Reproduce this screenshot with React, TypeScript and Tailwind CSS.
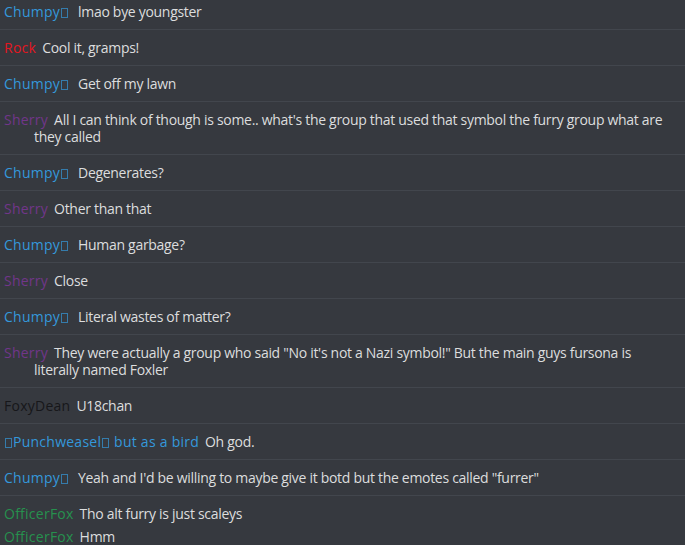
import React from 'react';

type Line = { name: string; color: string; text: string; tofu?: 'end' | 'both'; suffix?: string };

const Tofu: React.FC = () => (
  <span className="inline-block w-[7px] h-[10px] border border-current opacity-70 align-[-1px] mx-[1px]" />
);

const groups: Line[][] = [
  [{ name: 'Chumpy', color: 'text-[#3498db]', tofu: 'end', text: 'lmao bye youngster' }],
  [{ name: 'Rock', color: 'text-[#e3171f]', text: 'Cool it, gramps!' }],
  [{ name: 'Chumpy', color: 'text-[#3498db]', tofu: 'end', text: 'Get off my lawn' }],
  [
    {
      name: 'Sherry',
      color: 'text-[#71368a]',
      text: "All I can think of though is some.. what's the group that used that symbol the furry group what are they called",
    },
  ],
  [{ name: 'Chumpy', color: 'text-[#3498db]', tofu: 'end', text: 'Degenerates?' }],
  [{ name: 'Sherry', color: 'text-[#71368a]', text: 'Other than that' }],
  [{ name: 'Chumpy', color: 'text-[#3498db]', tofu: 'end', text: 'Human garbage?' }],
  [{ name: 'Sherry', color: 'text-[#71368a]', text: 'Close' }],
  [{ name: 'Chumpy', color: 'text-[#3498db]', tofu: 'end', text: 'Literal wastes of matter?' }],
  [
    {
      name: 'Sherry',
      color: 'text-[#71368a]',
      text: 'They were actually a group who said "No it\'s not a Nazi symbol!" But the main guys fursona is literally named Foxler',
    },
  ],
  [{ name: 'FoxyDean', color: 'text-[#16171a]', text: 'U18chan' }],
  [{ name: 'Punchweasel', color: 'text-[#3498db]', tofu: 'both', suffix: 'but as a bird', text: 'Oh god.' }],
  [
    {
      name: 'Chumpy',
      color: 'text-[#3498db]',
      tofu: 'end',
      text: 'Yeah and I\'d be willing to maybe give it botd but the emotes called "furrer"',
    },
  ],
  [
    { name: 'OfficerFox', color: 'text-[#26914e]', text: 'Tho alt furry is just scaleys' },
    { name: 'OfficerFox', color: 'text-[#26914e]', text: 'Hmm' },
  ],
];

const Message: React.FC<{ line: Line }> = ({ line }) => (
  <div className="pl-[34px] pr-[14px] indent-[-30px]">
    <span className={`${line.color} mr-[6px] tracking-[0.25px]`}>
      {line.tofu === 'both' && <Tofu />}
      {line.name}
      {line.tofu && <Tofu />}
      {line.suffix && <> {line.suffix}</>}
      {line.tofu === 'end' && !line.suffix && <span className="inline-block w-[3px]" />}
    </span>
    <span className="text-[#dcddde] tracking-[-0.3px]">{line.text}</span>
  </div>
);

export default function App() {
  return (
    <div
      className="w-[685px] h-[545px] overflow-hidden bg-[#36393f] text-[14px] leading-[17px]"
      style={{ fontFamily: '"Open Sans", "Noto Sans", sans-serif' }}
    >
      <div className="-mt-[7px]">
        {groups.map((group, i) => (
          <div key={i} className="border-t border-[#42464d] py-[9px] flex flex-col gap-[6px]">
            {group.map((line, j) => (
              <Message key={j} line={line} />
            ))}
          </div>
        ))}
      </div>
    </div>
  );
}
